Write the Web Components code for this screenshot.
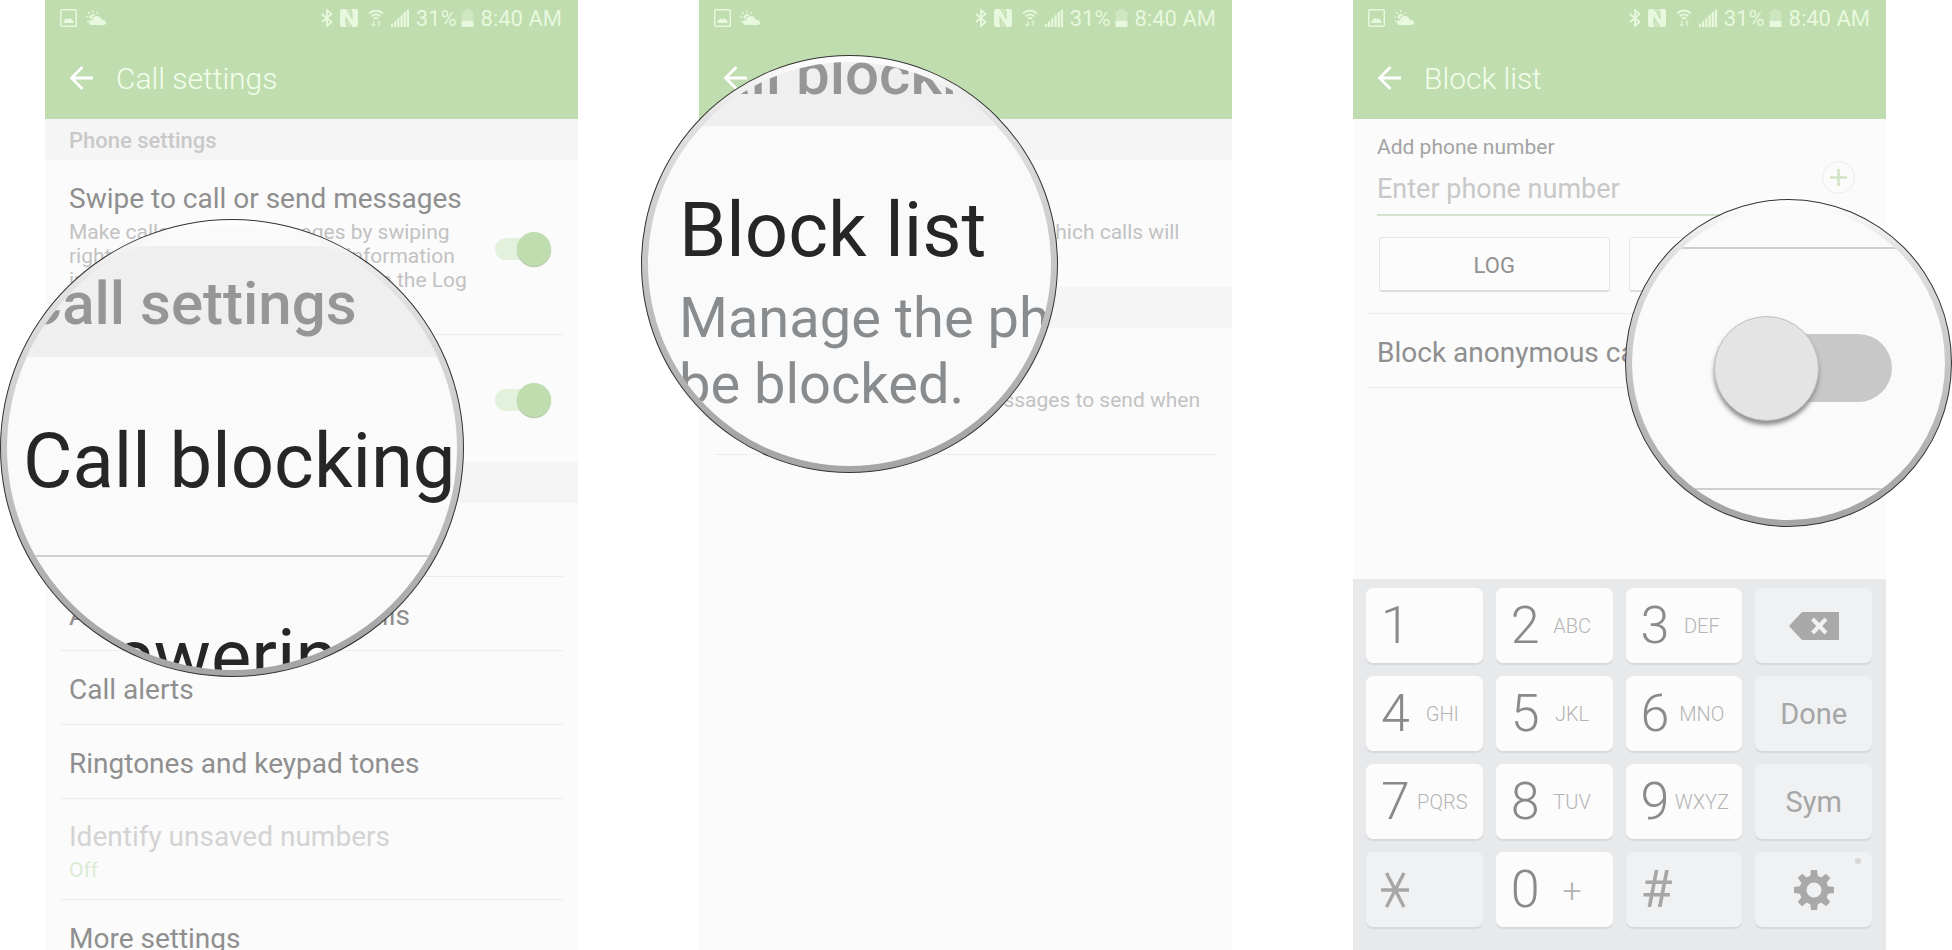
<!DOCTYPE html>
<html lang="en">
<head>
<meta charset="utf-8">
<title>Blocking calls on Android</title>
<style>
  body { margin: 0; background: #fff; font-family: Roboto, "Liberation Sans", sans-serif; color: #8f8f8f; }
</style>
</head>
<body>
<phone-gallery>
  <phone-screen heading="Call settings">
    <section-title>Phone settings</section-title>
    <setting-row heading="Swipe to call or send messages" switch>Make calls or send messages by swiping<br>right or left over the contact's information<br>in Contacts or on the call entries in the Log<br>tab of the Phone app.</setting-row>
    <setting-row heading="Proximity dialing" switch plain>Dial the contact on the screen<br>by bringing it to your ear.</setting-row>
    <section-title>Call settings</section-title>
    <setting-row heading="Call blocking"></setting-row>
    <setting-row heading="Answering and ending calls"></setting-row>
    <setting-row heading="Call alerts"></setting-row>
    <setting-row heading="Ringtones and keypad tones"></setting-row>
    <setting-row heading="Identify unsaved numbers" disabled>Off</setting-row>
    <setting-row heading="More settings"></setting-row>
    <magnifier-lens slot="lens" style="--x:-45px;--y:219px;--w:464px;--h:458px">
      <zoom-band style="--top:20px;--height:111px;--line:116px;--pad:16px">Call settings</zoom-band>
      <zoom-row style="--height:200px;--top:60px;--pad:16px">Call blocking</zoom-row>
      <zoom-row style="--height:200px;--top:56px;--pad:16px">Answering and ending calls</zoom-row>
    </magnifier-lens>
  </phone-screen>

  <phone-screen heading="Call blocking">
    <section-title>Call blocking</section-title>
    <setting-row heading="Block list" plain>Manage the phone numbers from which calls will<br>be blocked.</setting-row>
    <section-title>Call decline</section-title>
    <setting-row heading="Call-decline messages">Compose and manage the messages to send when<br>declining calls.</setting-row>
    <magnifier-lens slot="lens" style="--x:-58px;--y:55px;--w:417px;--h:418px">
      <zoom-band style="--top:0px;--height:64px;--line:24px;--pad:31px">Call blocking</zoom-band>
      <zoom-row style="--height:360px;--top:60px;--pad:31px">Block list<p slot="note">Manage the phone numbers<br>be blocked.</p></zoom-row>
    </magnifier-lens>
  </phone-screen>

  <phone-screen heading="Block list">
    <number-entry></number-entry>
    <setting-row heading="Block anonymous calls"></setting-row>
    <number-pad slot="footer"></number-pad>
    <magnifier-lens slot="lens" style="--x:272px;--y:199px;--w:327px;--h:328px">
      <zoom-toggle></zoom-toggle>
    </magnifier-lens>
  </phone-screen>
</phone-gallery>

<script>
const define = (name, markup, setup) => {
  const template = document.createElement('template');
  template.innerHTML = markup;
  customElements.define(name, class extends HTMLElement {
    constructor() {
      super();
      this.attachShadow({ mode: 'open' }).append(template.content.cloneNode(true));
    }
    connectedCallback() {
      if (setup) setup(this, this.shadowRoot);
    }
  });
};

define('phone-gallery', `
<style>
  :host { display: grid; grid-template: minmax(0, 1fr) / repeat(3, minmax(0, 1fr)); gap: 121px; padding: 0 66px 0 45px; height: 100vh; overflow: hidden; }
</style><slot></slot>`);

define('status-bar', `
<style>
  :host { display: flex; align-items: center; height: 36px; padding: 0 16px 0 15px; color: #e8f8de; font-size: 22px; line-height: 36px; }
  svg { display: block; fill: currentColor; }
  .left { display: flex; gap: 9px; flex: 1; }
  .right { display: flex; align-items: center; gap: 7px; white-space: nowrap; }
  .nfc { margin-right: 3px; }
  .power { display: flex; align-items: center; gap: 4px; }
  span { padding-top: 1px; }
</style>
<div class="left">
  <svg width="17" height="18" viewBox="0 0 17 18"><path fill-rule="evenodd" d="M2 0h13q2 0 2 2v14q0 2-2 2H2q-2 0-2-2V2q0-2 2-2zM1.500 1.500v15h14v-15zM3.500 14v-2l3-3 2 1.500 1.500-1.500 3.500 3V14z"/></svg>
  <svg width="20" height="18" viewBox="0 0 20 18"><path d="M6 16q-3 0-3-2.500T6 11q1-4 5-4 3.500 0 4.500 3.500Q20 11 20 13.500T17 16z"/><path d="M4 10a3.500 3.500 0 0 1 5.500-4Q6 7 5 10z"/><path d="M7 1v2.500M2 3l1.800 1.800M0 8h2.500M12 3l-1.500 1.600M1 13l2-1" stroke="currentColor" stroke-width="1.200"/></svg>
</div>
<div class="right">
  <svg width="12" height="18" viewBox="0 0 12 18"><path d="M1 5l9.500 8L6 17V1l4.500 4L1 13" fill="none" stroke="currentColor" stroke-width="1.800"/></svg>
  <svg class="nfc" width="18" height="18" viewBox="0 0 18 18"><path d="M2 0h4l6.500 11V3.500q0-1.500-1.500-3.500h5q2 0 2 2v14q0 2-2 2h-3.500L5.500 7v7.500q0 1.500 1.500 3.500H2q-2 0-2-2V2q0-2 2-2z"/><path d="M7.200 0h2.300q1.700 2 1.700 4v3zM10.800 18H8.500q-1.700-2-1.700-4v-3z" opacity=".45"/></svg>
  <svg width="16" height="18" viewBox="0 0 16 18"><path d="M1 4.500q7-6 14 0M3.500 7.300q4.500-4 9 0M5.800 9.800q2.200-2 4.400 0" fill="none" stroke="currentColor" stroke-width="1.700"/><path d="M5 12v3H3l2.500 3L8 15H6.500v-3zM11 11l2 2.500h-1.300V17h-1.400v-3.500H9z" opacity=".75"/></svg>
  <svg width="18" height="18" viewBox="0 0 18 18"><path d="M0 15.500L2 14v4H0zM3 13l2.200-1.800V18H3zM6.200 10l2.200-2v10H6.200zM9.500 7l2.200-2v13H9.500zM12.700 4l2.200-2v16h-2.200zM15.800 1L18 0v18h-2.200z"/></svg>
  <div class="power"><span>31%</span>
  <svg width="13" height="18" viewBox="0 0 13 18"><path d="M4 0h5v2h2q1.500 0 1.500 1.500V12H.5V3.500Q.5 2 2 2h2z" opacity=".4"/><path d="M.5 12h12v6H.5z"/></svg></div>
  <span>8:40 AM</span>
</div>`);

define('app-bar', `
<style>
  :host { display: flex; align-items: center; height: 83px; box-sizing: border-box; padding: 0 24px; gap: 23px; }
  button { border: 0; padding: 1px 0 0; background: none; color: #fff; display: block; }
  svg { display: block; }
  h1 { margin: 0; font-size: 30px; line-height: 36px; font-weight: 300; color: #f3fdec; padding-top: 2px; }
</style>
<button type="button" aria-label="Back"><svg width="24" height="26" viewBox="0 0 24 26"><path d="M13.500 2L2.500 13l11 11M2.500 13H24" fill="none" stroke="currentColor" stroke-width="2.800"/></svg></button>
<h1><slot></slot></h1>`);

define('phone-screen', `
<style>
  :host { position: relative; display: flex; flex-direction: column; min-width: 0; background: #fbfbfb; }
  header { flex: none; background: #bfddae; }
</style>
<header><status-bar></status-bar><app-bar></app-bar></header>
<slot></slot>
<slot name="footer"></slot>
<slot name="lens"></slot>`,
(host, root) => { root.querySelector('app-bar').textContent = host.getAttribute('heading'); });

define('section-title', `
<style>
  :host { display: block; flex: none; background: #f5f5f5; }
  h2 { margin: 0; padding: 2px 24px 0; font-size: 22px; line-height: 39px; font-weight: 500; color: #c9c9c9; }
</style><h2><slot></slot></h2>`);

define('setting-row', `
<style>
  :host { display: block; flex: none; padding: 0 15px; }
  .row { display: flex; align-items: center; padding: 22px 12px 18px 9px; border-bottom: 1px solid #ededed; }
  .text { flex: 1; min-width: 0; white-space: nowrap; }
  label { display: block; font-size: 28px; line-height: 33px; color: #8f8f8f; }
  .note { margin-top: 5px; font-size: 21px; line-height: 24px; color: #c2c2c2; }
  .note[hidden] { display: none; }
  :host([plain]) .row { border-color: transparent; }
  :host([disabled]) .row { padding-top: 21px; padding-bottom: 17px; }
  :host([disabled]) label { color: #d3d3d3; }
  :host([disabled]) .note { color: #dcebd4; }
  input { appearance: none; position: relative; flex: none; width: 56px; height: 34px; margin: 0; }
  input::before { content: ""; position: absolute; left: 0; top: 6px; width: 50px; height: 22px; border-radius: 11px; background: #e2f0dc; }
  input::after { content: ""; position: absolute; right: 0; top: 0; width: 34px; height: 34px; border-radius: 50%; background: #bfddae; box-shadow: 0 1px 1px #a9bf9d; }
</style>
<div class="row">
  <div class="text"><label for="toggle"></label><div class="note"><slot></slot></div></div>
  <input id="toggle" type="checkbox" role="switch" checked>
</div>`,
(host, root) => {
  const label = root.querySelector('label');
  label.textContent = host.getAttribute('heading');
  root.querySelector('.note').hidden = !host.childNodes.length;
  if (!host.hasAttribute('switch')) {
    root.querySelector('input').remove();
    label.removeAttribute('for');
  }
});

define('number-entry', `
<style>
  :host { display: block; flex: none; padding: 16px 15px 0; }
  .entry { display: flex; align-items: center; padding: 0 16px 0 9px; gap: 18px; }
  .field { flex: 1; min-width: 0; }
  label { display: block; font-size: 21px; line-height: 24px; color: #a3a3a3; }
  input { display: block; box-sizing: border-box; width: 100%; height: 57px; padding: 4px 0 0; border: 0; border-bottom: 2px solid #d3e0cb; background: none; font: 27px/33px Roboto, "Liberation Sans", sans-serif; color: #8f8f8f; outline: 0; }
  input::placeholder { color: #c8c8c8; opacity: 1; }
  .add { flex: none; width: 33px; height: 33px; padding: 0; border: 1px solid #ececec; border-radius: 50%; background: none; margin-top: 3px; }
  svg { display: block; margin: auto; }
  .picks { display: flex; gap: 19px; padding: 21px 12px 21px 11px; border-bottom: 1px solid #ededed; }
  .picks button { flex: 1; height: 55px; border: 1px solid #e6e6e6; border-bottom: 2px solid #dedede; border-radius: 3px; background: #fcfcfc; font: 22px/30px Roboto, "Liberation Sans", sans-serif; color: #909090; padding: 3px 0 0; }
</style>
<div class="entry">
  <div class="field"><label for="number">Add phone number</label><input id="number" type="tel" placeholder="Enter phone number"></div>
  <button class="add" type="button" aria-label="Add"><svg width="17" height="17" viewBox="0 0 17 17"><path d="M8.500 0v17M0 8.500h17" stroke="#cfe5c6" stroke-width="2.600"/></svg></button>
</div>
<div class="picks"><button type="button">LOG</button><button type="button">CONTACTS</button></div>`);

define('pad-key', `
<style>
  :host { display: grid; }
  button { position: relative; display: flex; align-items: center; min-width: 0; border: 0; border-radius: 7px; background: #fcfcfc; box-shadow: 0 2px 1px #d6d8da; padding: 0 8px 0 15px; font: 300 52px/60px Roboto, "Liberation Sans", sans-serif; color: #8a8a8a; }
  .letters { flex: 1; text-align: center; font-size: 20px; color: #b4b4b4; white-space: nowrap; }
  :host([soft]) button { background: #f0f1f3; color: #a6a6a6; font-weight: 400; }
  :host([word]) button { justify-content: center; padding: 0; font-size: 29px; }
  :host([plus]) .letters { font-size: 34px; }
  :host([soft]) .letters { display: none; }
</style>
<button type="button"><span><slot></slot></span><span class="letters"></span></button>`,
(host, root) => {
  root.querySelector('.letters').textContent = host.getAttribute('letters') || '';
  if (host.hasAttribute('name')) root.querySelector('button').setAttribute('aria-label', host.getAttribute('name'));
});

define('number-pad', `
<style>
  :host { display: grid; flex: none; margin-top: auto; grid-template-columns: repeat(4, minmax(0, 1fr)); grid-auto-rows: 75px; gap: 13px; padding: 9px 14px 23px 13px; background: #e8e9eb; }
  svg { display: block; }
  .dot { position: absolute; right: 11px; top: 6px; width: 6px; height: 6px; border-radius: 50%; background: #d8d8d8; }
</style>
<pad-key>1</pad-key><pad-key letters="ABC">2</pad-key><pad-key letters="DEF">3</pad-key>
<pad-key soft word name="Delete"><svg width="50" height="28" viewBox="0 0 50 28"><path d="M0 14L13 0h37v28H13z" fill="#a9a9a9"/><path d="M23.500 7l13.500 14M37 7L23.500 21" stroke="#f0f1f3" stroke-width="4"/></svg></pad-key>
<pad-key letters="GHI">4</pad-key><pad-key letters="JKL">5</pad-key><pad-key letters="MNO">6</pad-key><pad-key soft word>Done</pad-key>
<pad-key letters="PQRS">7</pad-key><pad-key letters="TUV">8</pad-key><pad-key letters="WXYZ">9</pad-key><pad-key soft word>Sym</pad-key>
<pad-key soft name="Star"><svg width="28" height="36" viewBox="0 0 28 36"><path d="M0 18h28M5.500 1l17.500 34M23 1L5.500 35" stroke="#a6a6a6" stroke-width="3.400" fill="none"/></svg></pad-key>
<pad-key plus letters="+">0</pad-key><pad-key soft>#</pad-key>
<pad-key soft word name="Settings"><svg width="40" height="40" viewBox="-20 -20 40 40"><g fill="#a9a9a9"><path id="tooth" d="M-4-12L-3-20H3L4-12z"/></g><circle r="11" fill="none" stroke="#a9a9a9" stroke-width="7"/></svg><i class="dot"></i></pad-key>`,
(host, root) => {
  const tooth = root.querySelector('#tooth');
  for (let angle = 45; angle < 360; angle += 45) {
    const copy = tooth.cloneNode();
    copy.removeAttribute('id');
    copy.setAttribute('transform', `rotate(${angle})`);
    tooth.parentNode.append(copy);
  }
});

define('magnifier-lens', `
<style>
  :host { position: absolute; left: var(--x); top: var(--y); width: var(--w); height: var(--h); box-sizing: border-box; border: 1px solid #333; border-radius: 50%; padding: 6px; background: linear-gradient(#ffffff, #e2e2e2 15%, #c6c6c6 50%, #a6a6a6 92%); }
  .glass { height: 100%; border-radius: 50%; overflow: hidden; background: #fafafa; }
</style><div class="glass"><slot></slot></div>`);

define('zoom-band', `
<style>
  :host { display: flex; align-items: flex-start; box-sizing: border-box; margin-top: var(--top); height: var(--height); padding-left: var(--pad); background: #efefef; color: #969696; font-size: 60px; font-weight: 500; line-height: var(--line); white-space: nowrap; }
</style><slot></slot>`);

define('zoom-row', `
<style>
  :host { display: block; box-sizing: border-box; height: var(--height); padding: var(--top) 0 0 var(--pad); border-bottom: 2px solid #cfcfcf; color: #262626; font-size: 76px; line-height: 88px; white-space: nowrap; }
  ::slotted(p) { margin: 0; padding-top: 11px; font-size: 56px; line-height: 66px; color: #888c8f; }
  slot[name] { display: flow-root; }
</style><slot></slot><slot name="note"></slot>`);
document.querySelectorAll('zoom-row > p').forEach(note => { note.style.margin = '0'; });

define('zoom-toggle', `
<style>
  :host { display: flex; align-items: center; justify-content: center; box-sizing: border-box; margin-top: 41px; height: 243px; padding-left: 29px; border: solid #cfcfcf; border-width: 2px 0; }
  input { appearance: none; position: relative; width: 178px; height: 105px; margin: 0; }
  input::before { content: ""; position: absolute; right: 0; top: 18px; width: 150px; height: 68px; border-radius: 34px; background: #c8c8c8; }
  input::after { content: ""; position: absolute; left: 0; top: 0; width: 105px; height: 105px; box-sizing: border-box; border: 1px solid #bdbdbd; border-radius: 50%; background: #e4e4e4; box-shadow: 0 4px 4px #8f8f8f; }
</style><input type="checkbox" role="switch" aria-label="Block anonymous calls">`);
</script>
</body>
</html>
